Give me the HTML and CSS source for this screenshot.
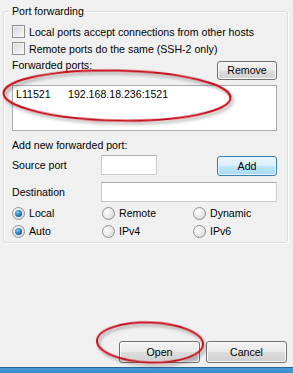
FILE: index.html
```html
<!DOCTYPE html>
<html>
<head>
<meta charset="utf-8">
<link rel="stylesheet" href="styles.css">
</head>
<body>
<div class="page">
  <fieldset class="group">
    <legend class="legend">Port forwarding</legend>
    <label class="check-row"><span class="checkbox"></span><span>Local ports accept connections from other hosts</span></label>
    <label class="check-row"><span class="checkbox"></span><span>Remote ports do the same (SSH-2 only)</span></label>
    <div class="fwd-head">
      <span class="fwd-label">Forwarded ports:</span>
      <button class="btn btn-small">Remove</button>
    </div>
    <div class="listbox">
      <div class="list-item"><span class="col-port">L11521</span><span>192.168.18.236:1521</span></div>
    </div>
    <div class="add-title">Add new forwarded port:</div>
    <div class="field-row">
      <span class="field-label">Source port</span>
      <span class="input input-short"></span>
      <button class="btn btn-small btn-default">Add</button>
    </div>
    <div class="field-row dest-row">
      <span class="field-label">Destination</span>
      <span class="input input-long"></span>
    </div>
    <div class="radio-grid">
      <span class="radio-item"><span class="radio on"></span>Local</span>
      <span class="radio-item"><span class="radio"></span>Remote</span>
      <span class="radio-item"><span class="radio"></span>Dynamic</span>
      <span class="radio-item"><span class="radio on"></span>Auto</span>
      <span class="radio-item"><span class="radio"></span>IPv4</span>
      <span class="radio-item"><span class="radio"></span>IPv6</span>
    </div>
  </fieldset>
  <div class="actions">
    <button class="btn btn-large">Open</button>
    <button class="btn btn-large">Cancel</button>
  </div>
  <div class="taskbar"></div>
  <svg class="marks" width="293" height="373" viewBox="0 0 293 373">
    <defs>
      <filter id="sh" x="-20%" y="-50%" width="140%" height="200%">
        <feDropShadow dx="2" dy="2.5" stdDeviation="1.6" flood-color="#000" flood-opacity="0.35"/>
      </filter>
    </defs>
    <ellipse cx="117" cy="95.5" rx="113.5" ry="25" transform="rotate(1.2 117 95.5)" fill="none" stroke="#c4101c" stroke-width="2" filter="url(#sh)"/>
    <ellipse cx="150" cy="342.5" rx="53" ry="20" transform="rotate(2 150 342.5)" fill="none" stroke="#c4101c" stroke-width="2" filter="url(#sh)"/>
  </svg>
</div>
</body>
</html>
```
FILE: styles.css
```css
html, body {
  margin: 0;
  padding: 0;
  background: #f0f0f0;
}
body {
  font-family: "Liberation Sans", Arial, sans-serif;
  font-size: 10.6px;
  color: #000;
  width: 293px;
  height: 373px;
  overflow: hidden;
}
.page {
  position: relative;
  width: 293px;
  height: 373px;
  display: flex;
  flex-direction: column;
}
.group {
  margin: 4px 5px 0 3px;
  padding: 5px 10px 2px 8px;
  border: 1px solid #d5dfe5;
  border-radius: 3px;
  box-shadow: inset 1px 1px 0 #fff, 1px 1px 0 #fff;
  min-width: 0;
}
.legend {
  padding: 0 2px;
  margin-left: -2px;
  line-height: 14px;
  height: 14px;
}
.check-row {
  display: flex;
  align-items: center;
  height: 17px;
  gap: 4px;
}
.checkbox {
  width: 11px;
  height: 11px;
  border: 1px solid #8f8f8f;
  background: linear-gradient(135deg, #d6d6d6 0%, #efefef 70%, #fafafa 100%);
  box-shadow: inset 0 0 0 1px #f4f4f4;
  flex: none;
}
.fwd-head {
  display: flex;
  align-items: flex-start;
  justify-content: space-between;
  margin-top: 4px;
  height: 19px;
}
.fwd-label {
  line-height: 13px;
  margin-top: -2px;
}
.btn {
  font-family: inherit;
  font-size: 10.6px;
  color: #000;
  border: 1px solid #707070;
  border-radius: 3px;
  padding: 0;
  background: linear-gradient(#f2f2f2 0%, #ebebeb 48%, #dddddd 52%, #cfcfcf 100%);
  box-shadow: inset 0 0 0 1px #fbfbfb;
  line-height: 1;
}
.btn-small {
  width: 60px;
  height: 19px;
}
.btn-default {
  border-color: #3c7fb1;
  background: linear-gradient(#eaf6fd 0%, #d9f0fc 48%, #bee6fd 52%, #a7d9f5 100%);
  box-shadow: inset 0 0 0 1px #e6f4fc;
  height: 20px;
  margin-top: 1px;
}
.btn-large {
  width: 81px;
  height: 22px;
}
.listbox {
  margin-top: 5px;
  height: 42px;
  border: 1px solid #a9abb1;
  background: #fff;
  padding: 2px 3px 0;
}
.list-item {
  display: flex;
  line-height: 13px;
}
.col-port {
  width: 52px;
}
.add-title {
  margin-top: 8px;
  line-height: 13px;
}
.field-row {
  display: flex;
  align-items: flex-start;
  margin-top: 3px;
  height: 21px;
}
.field-label {
  width: 89px;
  line-height: 20px;
  flex: none;
}
.input {
  height: 18px;
  border: 1px solid #c8cacd;
  border-top-color: #abadb3;
  background: #fff;
  box-sizing: content-box;
}
.input-short {
  width: 54px;
  margin-right: auto;
}
.dest-row {
  margin-top: 6px;
  height: 20px;
}
.input-long {
  flex: 1;
}
.radio-grid {
  display: grid;
  grid-template-columns: 90px 91px 1fr;
  grid-auto-rows: 18px;
  margin-top: 2px;
}
.radio-item {
  display: flex;
  align-items: center;
  gap: 4px;
}
.radio {
  position: relative;
  width: 11px;
  height: 11px;
  border: 1px solid #929292;
  border-radius: 50%;
  background: radial-gradient(circle at 35% 35%, #ffffff 0%, #e9e9e9 50%, #cfcfcf 100%);
  flex: none;
}
.radio.on::after {
  content: "";
  position: absolute;
  left: 2px;
  top: 2px;
  width: 7px;
  height: 7px;
  border-radius: 50%;
  background: radial-gradient(circle at 40% 35%, #8fd0f5 0%, #2a7fc0 45%, #0d3f73 100%);
}
.actions {
  display: flex;
  justify-content: flex-end;
  gap: 6px;
  margin-top: 98px;
  padding-right: 6px;
}
.taskbar {
  margin-top: auto;
  height: 5px;
  border-top: 1px solid #2a6497;
  background: linear-gradient(#4a9ad6, #3b8acb);
}
.marks {
  position: absolute;
  left: 0;
  top: 0;
  pointer-events: none;
  overflow: visible;
}
```
